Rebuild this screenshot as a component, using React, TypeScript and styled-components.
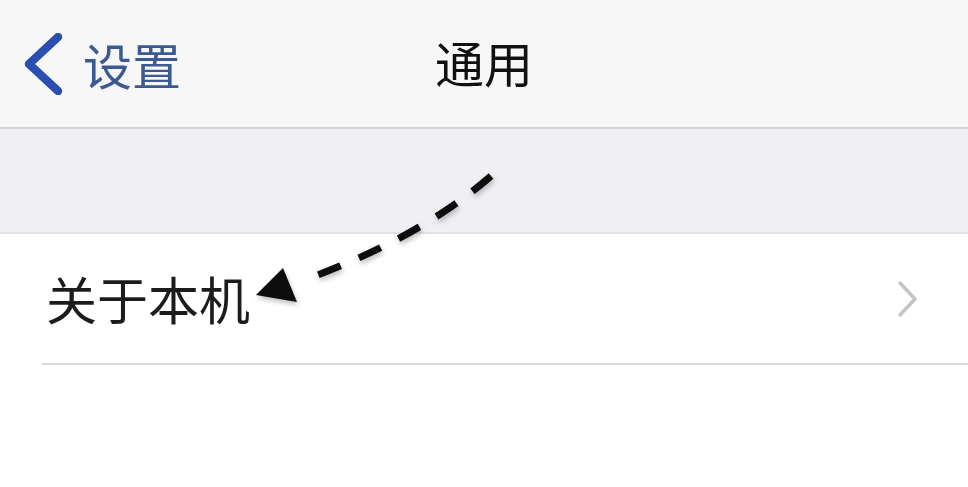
import React from 'react';
import styled, { createGlobalStyle } from 'styled-components';

const GlobalStyle = createGlobalStyle`
  html, body {
    margin: 0;
    padding: 0;
    background: #ffffff;
  }
  body {
    font-family: "Noto Sans CJK SC", "Noto Sans", sans-serif;
  }
`;

const Screen = styled.div`
  position: relative;
  width: 968px;
  height: 487px;
  overflow: hidden;
  background: #fefefe;
`;

const NavBar = styled.header`
  height: 127px;
  display: grid;
  grid-template-columns: 1fr auto 1fr;
  align-items: center;
  background: #f7f7f8;
  border-bottom: 2px solid #d2d2d4;
`;

const BackButton = styled.div`
  display: flex;
  align-items: center;
  gap: 19px;
  padding-left: 21px;
  color: #3b5a92;
  font-size: 49px;
  line-height: 1;
`;

const Title = styled.h1`
  margin: 0;
  font-size: 49px;
  font-weight: 400;
  color: #111111;
  line-height: 1;
  padding-bottom: 4px;
`;

const SectionGap = styled.div`
  height: 103px;
  background: #efeff4;
  border-bottom: 2px solid #e2e2e6;
`;

const Row = styled.div<{ $inset: number }>`
  padding-left: ${p => p.$inset}px;
  background: #ffffff;
`;

const RowContent = styled.div`
  height: 129px;
  display: flex;
  align-items: center;
  justify-content: space-between;
  padding-right: 48px;
  border-bottom: 2px solid #d9d9dc;
`;

const RowLabel = styled.span`
  font-size: 51px;
  color: #1c1c1c;
  line-height: 1;
  margin-left: 4px;
`;

const Annotation = styled.svg`
  position: absolute;
  left: 0;
  top: 0;
  pointer-events: none;
`;

const BackChevron = () => (
  <svg width="43" height="62" viewBox="0 0 43 62">
    <polyline
      points="37,4 8,31 37,58"
      fill="none"
      stroke="#2b4fb0"
      strokeWidth="8.5"
      strokeLinecap="round"
      strokeLinejoin="round"
    />
  </svg>
);

const Disclosure = () => (
  <svg width="24" height="40" viewBox="0 0 24 40">
    <polyline
      points="4,4 19,20 4,36"
      fill="none"
      stroke="#c4c4c8"
      strokeWidth="3.5"
      strokeLinecap="round"
      strokeLinejoin="round"
    />
  </svg>
);

export default function App() {
  return (
    <>
      <GlobalStyle />
      <Screen>
        <NavBar>
          <BackButton>
            <BackChevron />
            <span>设置</span>
          </BackButton>
          <Title>通用</Title>
          <div />
        </NavBar>
        <SectionGap />
        <Row $inset={42}>
          <RowContent>
            <RowLabel>关于本机</RowLabel>
            <Disclosure />
          </RowContent>
        </Row>

        {/* dashed pointer drawn over the list */}
        <Annotation width="968" height="487" viewBox="0 0 968 487">
          <defs>
            <filter id="soft" x="-20%" y="-20%" width="140%" height="140%">
              <feDropShadow dx="1" dy="3" stdDeviation="2.5" floodColor="#000" floodOpacity="0.25" />
            </filter>
          </defs>
          <g filter="url(#soft)">
            <path
              d="M 491 176 Q 420 238 304 280"
              fill="none"
              stroke="#0a0a0a"
              strokeWidth="7"
              strokeDasharray="24 20"
              strokeLinecap="butt"
            />
            <polygon points="256,295 283,268 297,302" fill="#0a0a0a" />
          </g>
        </Annotation>
      </Screen>
    </>
  );
}
